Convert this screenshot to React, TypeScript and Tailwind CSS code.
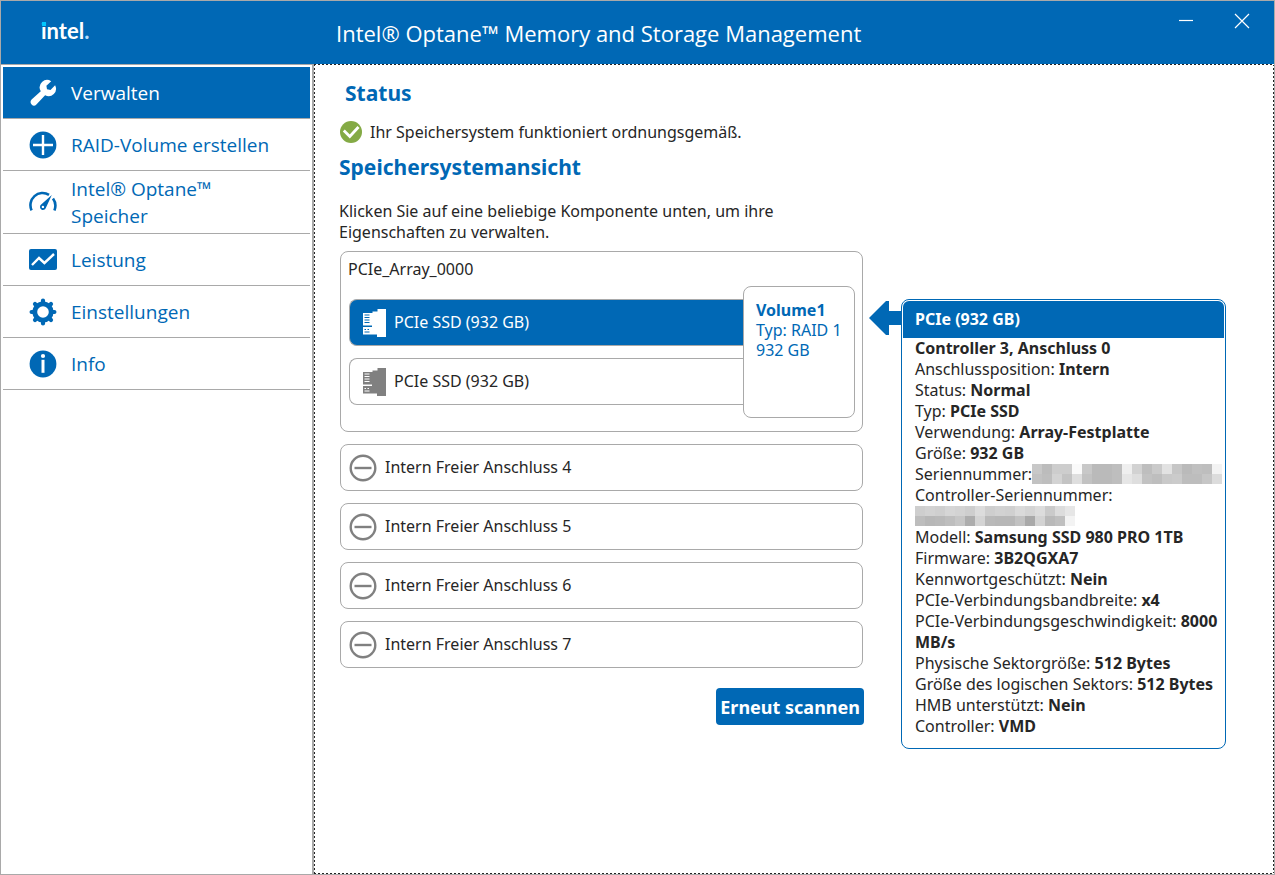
import { useState, type ReactNode } from "react";

interface NavItem {
  label: string;
  icon: ReactNode;
}

const NAV_ITEMS: NavItem[] = [
  { label: "Verwalten", icon: <WrenchIcon /> },
  { label: "RAID-Volume erstellen", icon: <PlusIcon /> },
  { label: "Intel® Optane™ Speicher", icon: <GaugeIcon /> },
  { label: "Leistung", icon: <ChartIcon /> },
  { label: "Einstellungen", icon: <GearIcon /> },
  { label: "Info", icon: <InfoIcon /> },
];

const DISKS = ["PCIe SSD (932 GB)", "PCIe SSD (932 GB)"];

const FREE_PORTS = [4, 5, 6, 7];

interface Detail {
  label: string;
  value?: string;
  masked?: string[][];
}

const SERIAL_ROWS = [
  ["#c8c8c8", "#bcbcbc", "#cdcdcd", "#cdcdcd", "#fafafa", "#c8c8c8", "#bababa", "#bababa", "#bebebe", "#efefef", "#d2d2d2", "#bebebe", "#cacaca", "#e2e2e2", "#c6c6c6", "#bababa", "#c0c0c0", "#bebebe", "#f3f3f3"],
  ["#c2c2c2", "#bebebe", "#d3d3d3", "#c3c3c3", "#dedede", "#c2c2c2", "#bababa", "#bababa", "#bebebe", "#e6e6e6", "#dedede", "#c2c2c2", "#bebebe", "#c9c9c9", "#cbcbcb", "#bdbdbd", "#bdbdbd", "#c6c6c6", "#dcdcdc"],
];

const CONTROLLER_ROWS = [
  ["#cecece", "#d2d2d2", "#cfcfcf", "#d6d6d6", "#d3d3d3", "#cecece", "#dcdcdc", "#cecece", "#d2d2d2", "#d0d0d0", "#dadada", "#d4d4d4", "#dcdcdc", "#cacaca", "#dcdcdc", "#e6e6e6"],
  ["#bdbdbd", "#b7b7b7", "#b9b9b9", "#bebebe", "#c6c6c6", "#adadad", "#d4d4d4", "#b9b9b9", "#b7b7b7", "#b7b7b7", "#c2c2c2", "#a9a9a9", "#d3d3d3", "#b9b9b9", "#bfbfbf", "#f3f3f3"],
];

const DETAILS: Detail[] = [
  { label: "Anschlussposition:", value: "Intern" },
  { label: "Status:", value: "Normal" },
  { label: "Typ:", value: "PCIe SSD" },
  { label: "Verwendung:", value: "Array-Festplatte" },
  { label: "Größe:", value: "932 GB" },
  { label: "Seriennummer:", masked: SERIAL_ROWS },
  { label: "Controller-Seriennummer:", masked: CONTROLLER_ROWS },
  { label: "Modell:", value: "Samsung SSD 980 PRO 1TB" },
  { label: "Firmware:", value: "3B2QGXA7" },
  { label: "Kennwortgeschützt:", value: "Nein" },
  { label: "PCIe-Verbindungsbandbreite:", value: "x4" },
  { label: "PCIe-Verbindungsgeschwindigkeit:", value: "8000 MB/s" },
  { label: "Physische Sektorgröße:", value: "512 Bytes" },
  { label: "Größe des logischen Sektors:", value: "512 Bytes" },
  { label: "HMB unterstützt:", value: "Nein" },
  { label: "Controller:", value: "VMD" },
];

function Mosaic({ rows }: { rows: string[][] }) {
  return (
    <span className="flex h-[21px] shrink-0 flex-col" aria-hidden="true">
      {rows.map((row, y) => (
        <span key={y} className="flex">
          {row.map((color, x) => (
            <span key={x} className="size-[10px]" style={{ backgroundColor: color }} />
          ))}
        </span>
      ))}
    </span>
  );
}

function DetailLine({ detail }: { detail: Detail }) {
  if (detail.masked) {
    // short values stay beside the label, the others drop to the next line
    return (
      <div className="flex flex-wrap">
        {detail.label}
        <Mosaic rows={detail.masked} />
      </div>
    );
  }
  return (
    <p>
      {detail.label} <b>{detail.value}</b>
    </p>
  );
}

function WrenchIcon() {
  return (
    <svg viewBox="0 0 28 28" className="size-7" fill="currentColor">
      <path d="M2.6 20.4 11.800 12.200a7.400 7.400 0 0 1 10.400-10l-4.800 4.600.6 3.400 3.500.7 4.600-4.600a7.400 7.400 0 0 1-10 10L7.400 25.400a3.300 3.300 0 0 1-4.800 0 3.400 3.400 0 0 1 0-5Z" />
    </svg>
  );
}

function PlusIcon() {
  return (
    <svg viewBox="0 0 28 28" className="size-7">
      <circle cx="14" cy="14" r="13.4" fill="currentColor" />
      <path d="M14 4v20M4 14h20" stroke="#fff" strokeWidth="2.4" />
    </svg>
  );
}

function GaugeIcon() {
  return (
    <svg viewBox="0 0 28 28" className="size-7" fill="none" stroke="currentColor" strokeWidth="2.6">
      <path d="M2.6 22.400A12.200 12.200 0 0 1 20 6.800M24 10.600a12.200 12.200 0 0 1 1.400 11.800" />
      <path d="M22.800 7 16.800 20a3 3 0 1 1-4.900-3.200Z" fill="currentColor" stroke="none" />
      <circle cx="13.900" cy="18.900" r="1.200" fill="#fff" stroke="none" />
    </svg>
  );
}

function ChartIcon() {
  return (
    <svg viewBox="0 0 28 28" className="size-7">
      <rect y="3" width="28" height="21" rx="2" fill="currentColor" />
      <path d="m3 19 7-7 5.4 5L25 8" fill="none" stroke="#fff" strokeWidth="2.4" />
    </svg>
  );
}

function GearIcon() {
  return (
    <svg viewBox="0 0 28 28" className="size-7" stroke="currentColor" fill="none">
      <circle cx="14" cy="14" r="8.2" strokeWidth="4.8" />
      <path
        d="M14 4V2.600M14 24v1.400M4 14H2.600M24 14h1.400M6.900 6.900l-.9-.9M21.100 21.100l.9.9M6.900 21.100l-.9.9M21.100 6.900l.9-.9"
        strokeWidth="4.2"
        strokeLinecap="round"
      />
    </svg>
  );
}

function InfoIcon() {
  return (
    <svg viewBox="0 0 28 28" className="size-7">
      <circle cx="14" cy="14" r="13.4" fill="currentColor" />
      <circle cx="14" cy="6" r="2.1" fill="#fff" />
      <path d="M14 9.800v13" stroke="#fff" strokeWidth="3" />
    </svg>
  );
}

function SsdIcon({ selected }: { selected: boolean }) {
  return (
    <svg
      viewBox="0 0 24 28"
      className={`h-7 w-6 shrink-0 ${selected ? "text-white" : "text-[#808080]"}`}
    >
      <path
        d="M15.500 0H24v28h-9v-2.500H1V18h9v-1.500H1V4h9.500V2.500h5Z"
        fill="currentColor"
      />
      <path
        d="M2.500 6h5M2.500 8.500h5M2.500 11h5M2.500 13.500h5M2.500 20.500h1.500M5.500 20.500h1.500M2.500 23h5"
        stroke={selected ? "#0068b5" : "#fff"}
        strokeWidth="1"
      />
    </svg>
  );
}

function EmptyPortIcon() {
  return (
    <svg viewBox="0 0 28 28" className="size-7 shrink-0" fill="none" stroke="#808080" strokeWidth="2.4">
      <circle cx="14" cy="14" r="12.3" />
      <path d="M5.500 14h17" />
    </svg>
  );
}

function CheckIcon() {
  return (
    <svg viewBox="0 0 22 22" className="size-[22px] shrink-0">
      <circle cx="11" cy="11" r="11" fill="#84aa45" />
      <path d="m3.800 9.500 6 6L18.500 6" fill="none" stroke="#fff" strokeWidth="2.8" />
    </svg>
  );
}

export default function App() {
  const [active, setActive] = useState(0);
  const [selectedDisk, setSelectedDisk] = useState(0);

  return (
    <div className="flex min-h-screen flex-col border border-[#a9a9a9] bg-white font-['Noto_Sans',sans-serif] text-base leading-[21px] text-[#262626]">
      <header className="flex h-[63px] items-center bg-[#0068b5] text-white">
        <div className="w-[335px] shrink-0 pb-0.5 pl-10">
          <span className="relative font-['Lato',sans-serif] text-[22px] leading-6 font-bold">
            intel<span className="text-[#b9defa]">.</span>
            <span className="absolute top-[5px] left-px size-1 bg-[#00c7fd]" />
          </span>
        </div>
        <h1 className="flex-1 pt-0.5 font-['Open_Sans',sans-serif] text-[22px]">
          Intel® Optane™ Memory and Storage Management
        </h1>
        <div className="flex gap-10 self-start pt-3 pr-6">
          <button aria-label="Minimieren" className="size-4">
            <svg viewBox="0 0 16 16" stroke="currentColor" strokeWidth="1.2">
              <path d="M1 7.500h14" />
            </svg>
          </button>
          <button aria-label="Schließen" className="size-4">
            <svg viewBox="0 0 16 16" stroke="currentColor" strokeWidth="1.2">
              <path d="m1 1 14 14M15 1 1 15" />
            </svg>
          </button>
        </div>
      </header>

      <div className="flex flex-1">
        <nav className="w-[313px] shrink-0 border-t border-r-2 border-[#a9a9a9] px-0.5 pt-0.5">
          {NAV_ITEMS.map((item, i) => (
            <button
              key={item.label}
              onClick={() => setActive(i)}
              className={`flex min-h-[52px] w-full items-center gap-[14px] border-b border-[#a9a9a9] py-[3px] pr-8 pl-[26px] text-left font-['Open_Sans',sans-serif] text-[19px] leading-[27px] ${
                active === i ? "bg-[#0068b5] text-white" : "text-[#0068b5]"
              }`}
            >
              <span className="shrink-0">{item.icon}</span>
              <span className="pt-0.5">{item.label}</span>
            </button>
          ))}
        </nav>

        <main className="flex flex-1 items-start pt-px pr-12 pl-[25px] [background:repeating-linear-gradient(90deg,#222_0_2px,#fff_2px_4px)_top/100%_1px_no-repeat,repeating-linear-gradient(90deg,#222_0_2px,#fff_2px_4px)_bottom/100%_1px_no-repeat,repeating-linear-gradient(#222_0_2px,#fff_2px_4px)_left/1px_100%_no-repeat,repeating-linear-gradient(#222_0_2px,#fff_2px_4px)_right/1px_100%_no-repeat]">
          <div className="flex-1 pt-3">
            <h2 className="pl-1.5 text-[21px] leading-8 font-bold text-[#0068b5]">Status</h2>
            <p className="mt-3 flex items-center gap-2 pl-px">
              <CheckIcon />
              Ihr Speichersystem funktioniert ordnungsgemäß.
            </p>
            <h2 className="mt-2 text-[21px] leading-8 font-bold text-[#0068b5]">
              Speichersystemansicht
            </h2>
            <p className="mt-[18px] max-w-[440px]">
              Klicken Sie auf eine beliebige Komponente unten, um ihre Eigenschaften zu verwalten.
            </p>

            <section className="mx-px mt-2 flex h-[181px] rounded-lg border border-[#a9a9a9] p-[7px]">
              <div className="flex flex-1 flex-col">
                <h3>PCIe_Array_0000</h3>
                <div className="mt-[19px] space-y-3 pl-px">
                  {DISKS.map((disk, i) => (
                    <button
                      key={i}
                      onClick={() => setSelectedDisk(i)}
                      className={`flex h-[47px] w-full items-center gap-2 rounded-l-lg border border-r-0 border-[#a9a9a9] pl-3 ${
                        selectedDisk === i ? "bg-[#0068b5] text-white" : ""
                      }`}
                    >
                      <SsdIcon selected={selectedDisk === i} />
                      {disk}
                    </button>
                  ))}
                </div>
              </div>
              <button className="mt-[27px] flex h-[132px] w-28 flex-col rounded-lg border border-[#a9a9a9] px-3 py-[13px] text-left leading-5 text-[#0068b5]">
                <span className="font-bold">Volume1</span>
                <span>Typ: RAID 1</span>
                <span>932 GB</span>
              </button>
            </section>

            <div className="mx-px mt-3 space-y-3">
              {FREE_PORTS.map((port) => (
                <button
                  key={port}
                  className="flex h-[47px] w-full items-center gap-2 rounded-lg border border-[#a9a9a9] pl-2"
                >
                  <EmptyPortIcon />
                  Intern Freier Anschluss {port}
                </button>
              ))}
            </div>

            <div className="mt-5 flex justify-end">
              <button className="h-[37px] rounded bg-[#0068b5] px-1 text-lg font-bold text-white">
                Erneut scannen
              </button>
            </div>
          </div>

          <aside className="relative mt-[234px] ml-[37px] w-[325px] rounded-lg border border-[#0068b5] p-px pb-[11px]">
            <svg
              viewBox="0 0 33 36"
              className="absolute top-0 right-full h-9 w-[33px]"
              fill="#0068b5"
            >
              <path d="M0 18 17 1h3v10h13v14H20v10h-3Z" />
            </svg>
            <h3 className="rounded-t-md bg-[#0068b5] px-3 py-2 font-bold text-white">
              PCIe (932 GB)
            </h3>
            <div className="pl-3">
              <p className="font-bold">Controller 3, Anschluss 0</p>
              {DETAILS.map((detail) => (
                <DetailLine key={detail.label} detail={detail} />
              ))}
            </div>
          </aside>
        </main>
      </div>
    </div>
  );
}
